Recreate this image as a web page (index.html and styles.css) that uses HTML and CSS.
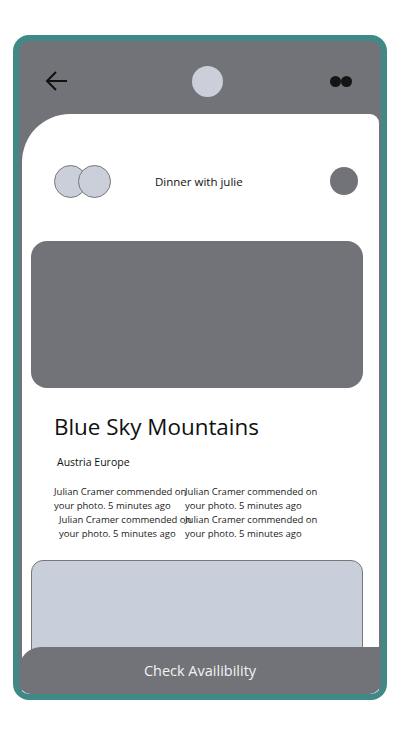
FILE: index.html
```html
<!DOCTYPE html>
<html>
<head>
<meta charset="utf-8">
<link rel="stylesheet" href="styles.css">
</head>
<body>
<div class="phone">
  <header class="topbar">
    <svg class="back" width="24" height="22" viewBox="0 0 24 22"><path d="M22 11H2M11 2L2 11L11 20" fill="none" stroke="#111" stroke-width="2"/></svg>
    <span class="avatar-top"></span>
    <span class="dots"><i></i><i></i></span>
  </header>
  <main class="sheet">
    <div class="event-row">
      <div class="pair"><span class="c"></span><span class="c c2"></span></div>
      <div class="event-title">Dinner with julie</div>
      <span class="grey-dot"></span>
    </div>
    <div class="hero"></div>
    <h1 class="title">Blue Sky Mountains</h1>
    <p class="place">Austria Europe</p>
    <div class="comments">
      <div class="cell">Julian Cramer commended on<br>your photo. 5 minutes ago</div>
      <div class="cell">Julian Cramer commended on<br>your photo. 5 minutes ago</div>
      <div class="cell indent">Julian Cramer commended on<br>your photo. 5 minutes ago</div>
      <div class="cell">Julian Cramer commended on<br>your photo. 5 minutes ago</div>
    </div>
    <div class="lower"></div>
  </main>
  <button class="cta">Check Availibility</button>
</div>
</body>
</html>
```
FILE: styles.css
```css
* { box-sizing: border-box; }
html, body { margin: 0; padding: 0; background: #fff; }
body { font-family: "Open Sans", "Noto Sans", sans-serif; color: #111; }

.phone {
  position: relative;
  margin: 35px 0 0 13px;
  width: 374px;
  height: 665px;
  border: 6px solid #3f8a86;
  border-radius: 16px;
  background: #717378;
  overflow: hidden;
  display: flex;
  flex-direction: column;
}

.topbar {
  height: 73px;
  flex: none;
  display: flex;
  align-items: center;
  justify-content: space-between;
  padding: 7px 29px 0 26px;
}
.back { display: block; }
.avatar-top {
  width: 31px; height: 31px; border-radius: 50%;
  background: #cacfda;
  margin-left: 16px;
}
.dots { display: flex; gap: 0; }
.dots i {
  width: 11px; height: 11px; border-radius: 50%;
  background: #141414; display: block;
}

.sheet {
  flex: 1;
  margin: 0 2px 0 3px;
  background: #fff;
  border-radius: 48px 9px 0 0;
  overflow: hidden;
}

.event-row {
  display: flex;
  align-items: center;
  margin-top: 50px;
  padding: 0 21px 0 32px;
  height: 34px;
}
.pair { display: flex; width: 57px; }
.pair .c {
  width: 33px; height: 33px; border-radius: 50%;
  background: #cacfda; border: 1px solid #777;
  display: block;
}
.pair .c2 { margin-left: -9px; }
.event-title {
  flex: 1;
  padding-left: 44px;
  font-size: 11.5px;
  font-weight: 500;
}
.grey-dot {
  width: 28px; height: 28px; border-radius: 50%; background: #717378;
}

.hero {
  margin: 43px 0 0 9px;
  width: 332px;
  height: 147px;
  border-radius: 16px;
  background: #717378;
}

.title {
  margin: 24px 0 0 32px;
  font-size: 22.4px;
  font-weight: 500;
  line-height: 30px;
}
.place {
  margin: 12px 0 0 35px;
  font-size: 10.5px;
  line-height: 16px;
}

.comments {
  display: grid;
  grid-template-columns: 131px 131px;
  margin: 15px 0 0 32px;
  font-size: 9.5px;
  line-height: 14px;
  color: #1a1a1a;
}
.cell { white-space: nowrap; }
.indent { padding-left: 5px; }

.lower {
  margin: 19px 0 0 9px;
  width: 332px;
  height: 160px;
  border: 1px solid #777;
  border-radius: 12px;
  background: #c9cfda;
}

.cta {
  position: absolute;
  left: 0; right: 0; bottom: 0;
  height: 47px;
  border: none;
  border-radius: 22px 0 12px 12px;
  background: #717378;
  color: #f2f2f2;
  font-family: "Open Sans", "Noto Sans", sans-serif;
  font-size: 14.5px;
  padding: 0 0 1px 0;
}
```
